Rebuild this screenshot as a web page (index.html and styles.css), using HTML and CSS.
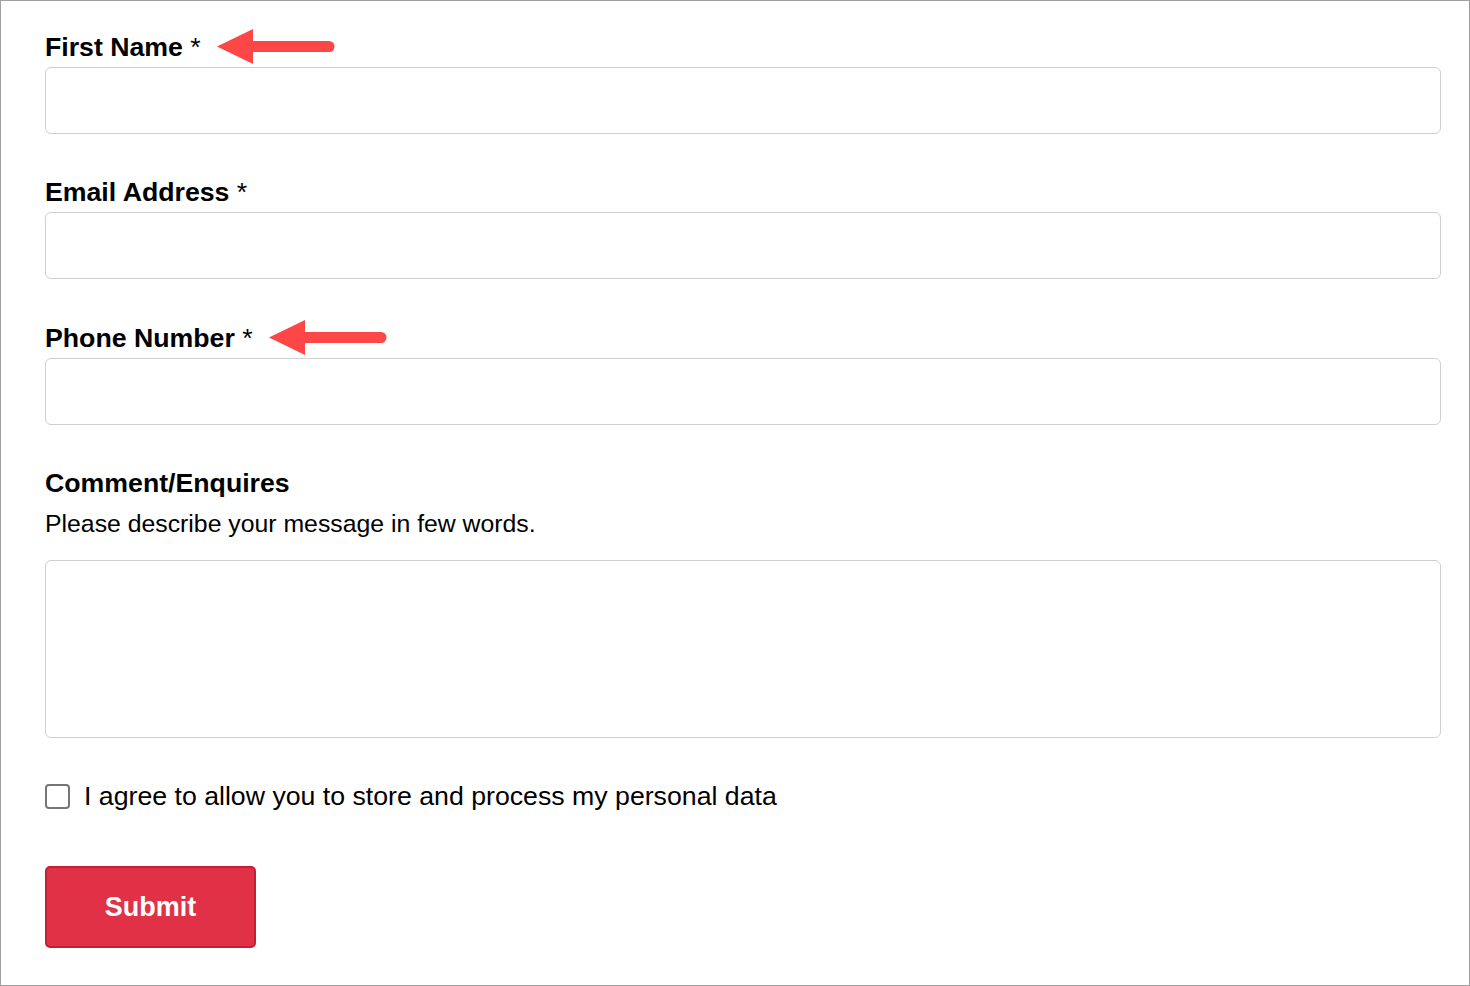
FILE: index.html
```html
<!DOCTYPE html>
<html lang="en">
<head>
<meta charset="utf-8">
<title>Contact form</title>
<link rel="stylesheet" href="styles.css">
</head>
<body>
<div class="frame">
  <form class="form">
    <div class="field">
      <label class="label"><span>First Name <span class="req">*</span></span><svg class="arrow" width="118" height="36" viewBox="0 0 118 36"><polygon points="0,17.5 36,0 36,35" fill="#fd4646"/><line x1="32" y1="17.5" x2="112" y2="17.5" stroke="#fd4646" stroke-width="11" stroke-linecap="round"/></svg></label>
      <input class="input" type="text">
    </div>
    <div class="field">
      <label class="label"><span>Email Address <span class="req">*</span></span></label>
      <input class="input" type="email">
    </div>
    <div class="field field-phone">
      <label class="label"><span>Phone Number <span class="req">*</span></span><svg class="arrow" width="118" height="36" viewBox="0 0 118 36"><polygon points="0,17.5 36,0 36,35" fill="#fd4646"/><line x1="32" y1="17.5" x2="112" y2="17.5" stroke="#fd4646" stroke-width="11" stroke-linecap="round"/></svg></label>
      <input class="input" type="tel">
    </div>
    <div class="field field-comment">
      <label class="label"><span>Comment/Enquires</span></label>
      <p class="desc">Please describe your message in few words.</p>
      <textarea class="textarea"></textarea>
    </div>
    <label class="check">
      <input type="checkbox" class="checkbox">
      <span>I agree to allow you to store and process my personal data</span>
    </label>
    <button type="button" class="submit">Submit</button>
  </form>
</div>
</body>
</html>
```
FILE: styles.css
```css
* { box-sizing: border-box; }
html, body { margin: 0; padding: 0; background: #fff; }
body { font-family: "Liberation Sans", Arial, sans-serif; color: #000; }
.frame {
  width: 1470px;
  height: 986px;
  border: 1px solid #a0a0a0;
  padding: 31px 28px 0 44px;
}
.form { display: flex; flex-direction: column; }
.field { display: flex; flex-direction: column; margin-bottom: 43px; }
.field-phone { margin-top: 1px; }
.label {
  display: flex;
  align-items: center;
  font-weight: 700;
  font-size: 26.7px;
  line-height: 30px;
  height: 30px;
  margin-bottom: 5px;
  white-space: nowrap;
}
.req { font-weight: 400; }
.arrow { margin-left: 16px; flex: none; }
.input {
  display: block;
  width: 1396px;
  height: 67px;
  border: 1px solid #cfcfcf;
  border-radius: 6px;
  background: #fff;
  font: inherit;
  outline: none;
}
.desc {
  margin: 6px 0 21px;
  font-size: 24.8px;
  line-height: 30px;
}
.textarea {
  display: block;
  width: 1396px;
  height: 178px;
  border: 1px solid #cfcfcf;
  border-radius: 6px;
  resize: none;
  outline: none;
  font: inherit;
}
.check {
  display: flex;
  align-items: center;
  gap: 14px;
  margin-top: 0;
  font-size: 26.7px;
  line-height: 30px;
}
.checkbox {
  appearance: none;
  -webkit-appearance: none;
  margin: 0;
  width: 25px;
  height: 25px;
  border: 2px solid #767676;
  border-radius: 4px;
  background: #fff;
  flex: none;
}
.submit {
  margin-top: 55px;
  align-self: flex-start;
  width: 211px;
  height: 82px;
  background: #e03147;
  border: 2px solid #c41f35;
  border-radius: 5px;
  color: #fff;
  font-family: "Liberation Sans", Arial, sans-serif;
  font-weight: 700;
  font-size: 27px;
  cursor: pointer;
}
```
